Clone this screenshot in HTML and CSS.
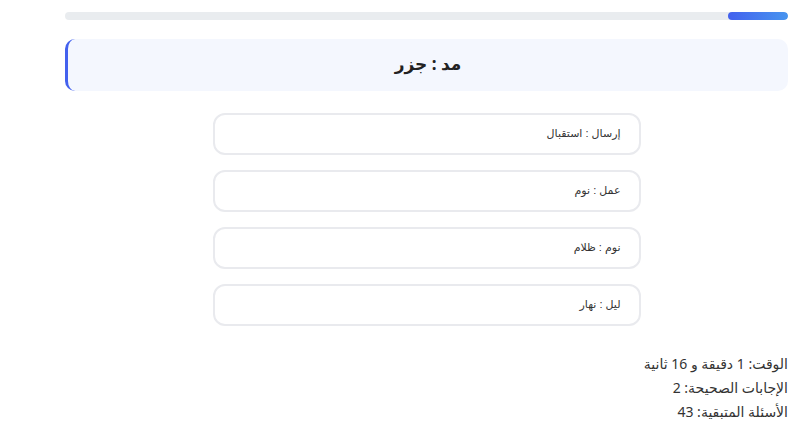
FILE: index.html
```html
<!DOCTYPE html>
<html lang="ar" dir="rtl">
<head>
<meta charset="utf-8">
<title>اختبار</title>
<link rel="stylesheet" href="styles.css">
</head>
<body>
<main class="quiz">
  <div class="progress"><div class="progress-fill" style="width: 8.3%"></div></div>
  <section class="question">
    <h2 class="question-text">مد : جزر</h2>
  </section>
  <div class="options">
    <button class="option">إرسال : استقبال</button>
    <button class="option">عمل : نوم</button>
    <button class="option">نوم : ظلام</button>
    <button class="option">ليل : نهار</button>
  </div>
  <div class="stats">
    <p class="stat">الوقت: 1 دقيقة و 16 ثانية</p>
    <p class="stat">الإجابات الصحيحة: 2</p>
    <p class="stat">الأسئلة المتبقية: 43</p>
  </div>
</main>
</body>
</html>
```

FILE: styles.css
```css
* { box-sizing: border-box; }
html, body { margin: 0; padding: 0; background: #ffffff; }
body {
  font-family: "Noto Sans", "DejaVu Sans", sans-serif;
  color: #333;
}
.quiz {
  padding: 12px 12px 0 65px;
  display: flex;
  flex-direction: column;
}
.progress {
  height: 8px;
  background: #e9ecef;
  border-radius: 4px;
  overflow: hidden;
  display: flex;
}
.progress-fill {
  height: 100%;
  background: linear-gradient(to left, #4895ef, #4361ee);
  border-radius: 4px;
}
.question {
  margin-top: 19px;
  height: 52px;
  padding-bottom: 3px;
  background: #f4f7fe;
  border-left: 3px solid #4361ee;
  border-radius: 10px;
  display: flex;
  align-items: center;
  justify-content: center;
}
.question-text {
  margin: 0;
  font-size: 17px;
  font-weight: 700;
  color: #222;
}
.options {
  margin-top: 22px;
  align-self: center;
  width: 428px;
  display: flex;
  flex-direction: column;
  gap: 15px;
}
.option {
  height: 42px;
  background: #fff;
  border: 2px solid #e9eaee;
  border-radius: 12px;
  padding: 0 18px 2px;
  text-align: right;
  font-family: "Liberation Sans", "DejaVu Sans", sans-serif;
  font-size: 11px;
  color: #333;
}
.stats {
  margin-top: 26px;
  display: flex;
  flex-direction: column;
}
.stat {
  margin: 0;
  font-size: 14px;
  line-height: 24px;
  color: #333;
}
```
